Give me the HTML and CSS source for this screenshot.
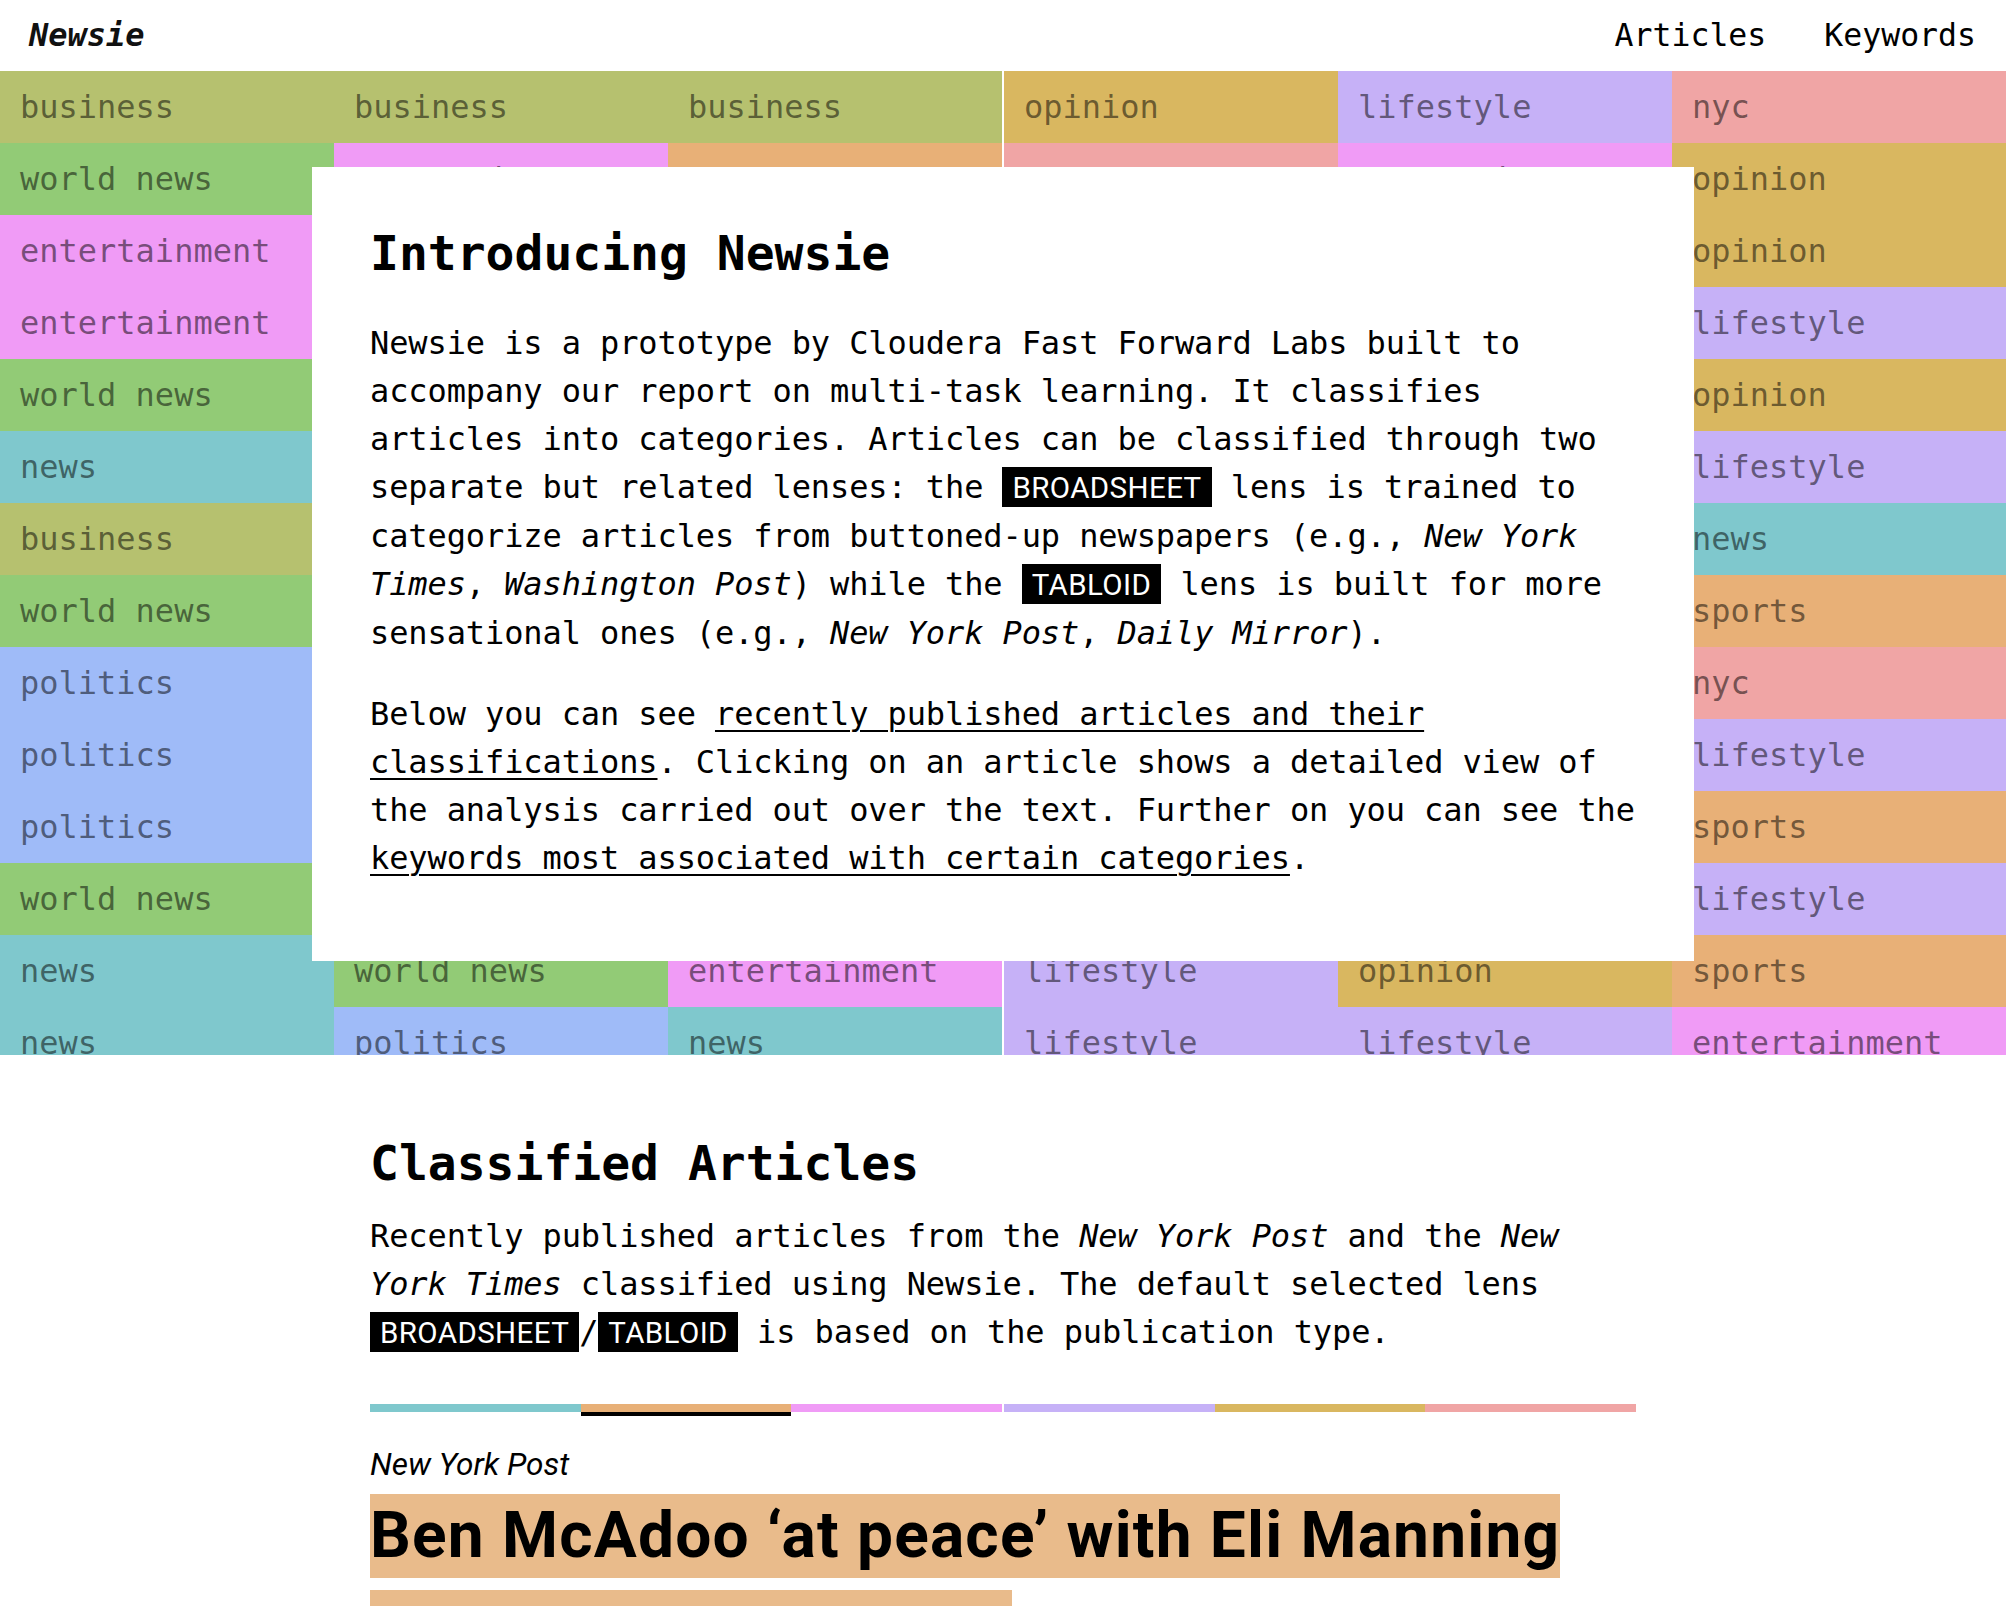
FILE: index.html
```html
<!DOCTYPE html>
<html lang="en">
<head>
<meta charset="utf-8">
<title>Newsie</title>
<link rel="stylesheet" href="styles.css">
</head>
<body>
<header class="topbar">
  <a class="logo" href="#">Newsie</a>
  <nav class="nav">
    <a href="#">Articles</a>
    <a href="#">Keywords</a>
  </nav>
</header>

<section class="hero">
  <div class="mosaic">
    <div class="group">
      <div class="cell c-business">business</div><div class="cell c-business">business</div><div class="cell c-business">business</div>
      <div class="cell c-world">world news</div><div class="cell c-ent">entertainment</div><div class="cell c-sports">sports</div>
      <div class="cell c-ent">entertainment</div><div class="cell c-politics">politics</div><div class="cell c-news">news</div>
      <div class="cell c-ent">entertainment</div><div class="cell c-business">business</div><div class="cell c-world">world news</div>
      <div class="cell c-world">world news</div><div class="cell c-news">news</div><div class="cell c-politics">politics</div>
      <div class="cell c-news">news</div><div class="cell c-world">world news</div><div class="cell c-business">business</div>
      <div class="cell c-business">business</div><div class="cell c-politics">politics</div><div class="cell c-ent">entertainment</div>
      <div class="cell c-world">world news</div><div class="cell c-news">news</div><div class="cell c-world">world news</div>
      <div class="cell c-politics">politics</div><div class="cell c-business">business</div><div class="cell c-politics">politics</div>
      <div class="cell c-politics">politics</div><div class="cell c-world">world news</div><div class="cell c-news">news</div>
      <div class="cell c-politics">politics</div><div class="cell c-ent">entertainment</div><div class="cell c-business">business</div>
      <div class="cell c-world">world news</div><div class="cell c-politics">politics</div><div class="cell c-world">world news</div>
      <div class="cell c-news">news</div><div class="cell c-world">world news</div><div class="cell c-ent">entertainment</div>
      <div class="cell c-news">news</div><div class="cell c-politics">politics</div><div class="cell c-news">news</div>
    </div>
    <div class="group">
      <div class="cell c-opinion">opinion</div><div class="cell c-lifestyle">lifestyle</div><div class="cell c-nyc">nyc</div>
      <div class="cell c-nyc">nyc</div><div class="cell c-ent">entertainment</div><div class="cell c-opinion">opinion</div>
      <div class="cell c-sports">sports</div><div class="cell c-lifestyle">lifestyle</div><div class="cell c-opinion">opinion</div>
      <div class="cell c-lifestyle">lifestyle</div><div class="cell c-opinion">opinion</div><div class="cell c-lifestyle">lifestyle</div>
      <div class="cell c-opinion">opinion</div><div class="cell c-nyc">nyc</div><div class="cell c-opinion">opinion</div>
      <div class="cell c-lifestyle">lifestyle</div><div class="cell c-sports">sports</div><div class="cell c-lifestyle">lifestyle</div>
      <div class="cell c-nyc">nyc</div><div class="cell c-lifestyle">lifestyle</div><div class="cell c-news">news</div>
      <div class="cell c-opinion">opinion</div><div class="cell c-sports">sports</div><div class="cell c-sports">sports</div>
      <div class="cell c-sports">sports</div><div class="cell c-opinion">opinion</div><div class="cell c-nyc">nyc</div>
      <div class="cell c-lifestyle">lifestyle</div><div class="cell c-nyc">nyc</div><div class="cell c-lifestyle">lifestyle</div>
      <div class="cell c-ent">entertainment</div><div class="cell c-lifestyle">lifestyle</div><div class="cell c-sports">sports</div>
      <div class="cell c-opinion">opinion</div><div class="cell c-sports">sports</div><div class="cell c-lifestyle">lifestyle</div>
      <div class="cell c-lifestyle">lifestyle</div><div class="cell c-opinion">opinion</div><div class="cell c-sports">sports</div>
      <div class="cell c-lifestyle">lifestyle</div><div class="cell c-lifestyle">lifestyle</div><div class="cell c-ent">entertainment</div>
    </div>
  </div>

  <div class="intro">
    <h1 class="intro-title">Introducing Newsie</h1>
    <p class="copy">Newsie is a prototype by Cloudera Fast Forward Labs built to accompany our report on multi-task learning. It classifies articles into categories. Articles can be classified through two separate but related lenses: the <span class="badge">BROADSHEET</span> lens is trained to categorize articles from buttoned-up newspapers (e.g., <em>New York Times</em>, <em>Washington Post</em>) while the <span class="badge">TABLOID</span> lens is built for more sensational ones (e.g., <em>New York Post</em>, <em>Daily Mirror</em>).</p>
    <p class="copy">Below you can see <a href="#">recently published articles and their classifications</a>. Clicking on an article shows a detailed view of the analysis carried out over the text. Further on you can see the <a href="#">keywords most associated with certain categories</a>.</p>
  </div>
</section>

<section class="classified">
  <h2 class="section-title">Classified Articles</h2>
  <p class="copy">Recently published articles from the <em>New York Post</em> and the <em>New York Times</em> classified using Newsie. The default selected lens <span class="badge">BROADSHEET</span>/<span class="badge">TABLOID</span> is based on the publication type.</p>

  <div class="lens-bar">
    <span class="seg c-news"></span>
    <span class="seg c-sports is-active"></span>
    <span class="seg c-ent"></span>
    <span class="seg c-lifestyle gap"></span>
    <span class="seg c-opinion"></span>
    <span class="seg c-nyc"></span>
  </div>

  <article class="article">
    <div class="source">New York Post</div>
    <h3 class="headline"><span class="hl">Ben McAdoo ‘at peace’ with Eli Manning</span></h3>
    <div class="summary"></div>
  </article>
</section>
</body>
</html>
```

FILE: styles.css
```css
* { box-sizing: border-box; }

html, body {
  margin: 0;
  padding: 0;
  background: #ffffff;
  color: #000000;
  font-family: "DejaVu Sans Mono", "Liberation Mono", monospace;
}

a { color: inherit; }

/* ---------- header ---------- */
.topbar {
  height: 71px;
  display: flex;
  align-items: center;
  justify-content: space-between;
  padding: 0 30px 0 29px;
}

.logo {
  font-size: 32px;
  line-height: 71px;
  font-weight: bold;
  font-style: italic;
  text-decoration: none;
  color: #111;
}

.nav {
  display: flex;
  gap: 58px;
}

.nav a {
  font-size: 31.5px;
  line-height: 71px;
  text-decoration: none;
  color: #000;
}

/* ---------- hero mosaic ---------- */
.hero {
  position: relative;
  height: 984px;
  overflow: hidden;
}

.mosaic {
  display: flex;
  gap: 2px;
  background: #fff;
}

.group {
  flex: 1;
  display: grid;
  grid-template-columns: repeat(3, 1fr);
  grid-auto-rows: 72px;
}

.cell {
  padding-left: 20px;
  font-size: 32px;
  line-height: 72px;
  white-space: nowrap;
  overflow: hidden;
  color: rgba(0, 0, 0, 0.52);
}

.c-business  { background: #b6c16f; }
.c-world     { background: #92cb76; }
.c-ent       { background: #f09bf6; }
.c-news      { background: #7fc8cd; }
.c-politics  { background: #9fbbf8; }
.c-opinion   { background: #d9b760; }
.c-lifestyle { background: #c6b1f7; }
.c-nyc       { background: #f0a5a5; }
.c-sports    { background: #e8b077; }

/* ---------- intro modal ---------- */
.intro {
  position: absolute;
  top: 96px;
  left: 312px;
  width: 1382px;
  background: #fff;
  padding: 56px 58px 79px 58px;
}

.intro-title,
.section-title {
  margin: 0;
  font-size: 48px;
  line-height: 60px;
  font-weight: bold;
}

.copy {
  margin: 33px 0 0 0;
  font-size: 32px;
  line-height: 48px;
  letter-spacing: -0.1px;
}

.intro-title + .copy { margin-top: 36px; }

.copy a {
  text-decoration: underline;
  text-underline-offset: 5px;
  text-decoration-thickness: 2px;
}

.copy em { font-style: italic; }

.badge {
  background: #000;
  color: #fff;
  font-family: Roboto, "Liberation Sans", sans-serif;
  font-size: 29.5px;
  letter-spacing: 0.4px;
  padding: 4px 10px 2px 10px;
}

/* ---------- classified ---------- */
.classified {
  width: 1266px;
  margin: 0 auto;
  padding-top: 78px;
}

.section-title + .copy { margin-top: 19px; }

.lens-bar {
  display: flex;
  margin-top: 47px;
  height: 8px;
}

.seg {
  flex: 1;
  position: relative;
}

.seg.gap { border-left: 2px solid #fff; }

.seg.is-active::after {
  content: "";
  position: absolute;
  left: 0;
  right: 0;
  top: 8px;
  height: 4px;
  background: #000;
}

.article { margin-top: 33px; }

.source {
  font-family: Roboto, "Liberation Sans", sans-serif;
  font-style: italic;
  font-size: 31.5px;
  line-height: 40px;
}

.headline {
  margin: 9px 0 0 0;
  font-family: Roboto, "Liberation Sans", sans-serif;
  font-weight: bold;
  font-size: 64px;
  line-height: 84px;
}

.hl {
  display: inline-block;
  line-height: 84px;
  letter-spacing: 1.2px;
  background: #e9bb8b;
}

.summary {
  margin-top: 12px;
  width: 642px;
  height: 40px;
  background: #e9bb8b;
}
```
